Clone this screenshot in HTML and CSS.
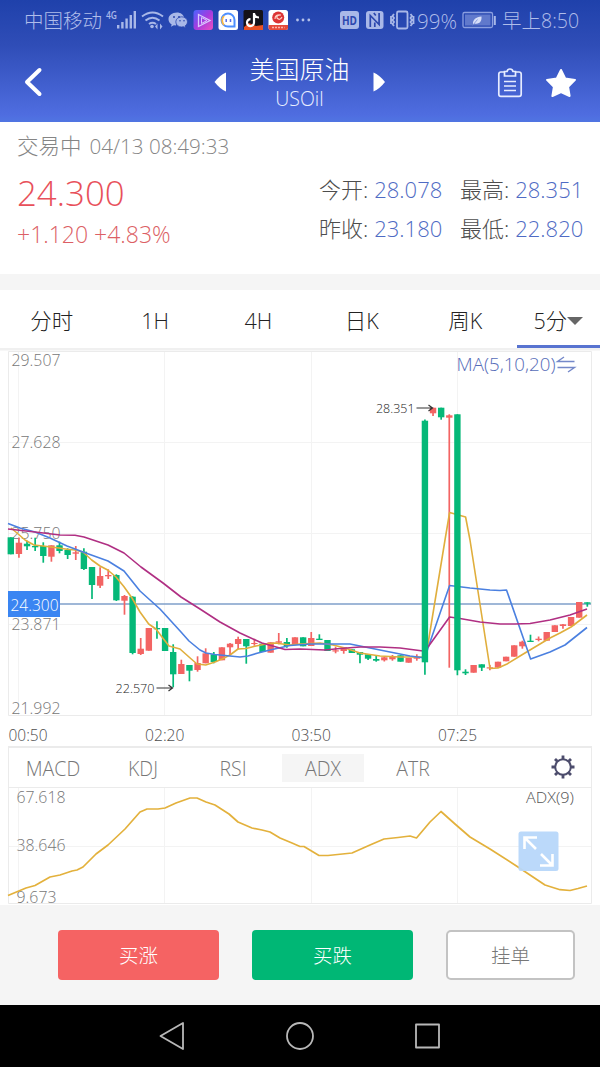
FILE: index.html
```html
<!DOCTYPE html>
<html lang="zh-CN">
<head>
<meta charset="utf-8">
<title>美国原油 USOil</title>
<link rel="stylesheet" href="styles.css">
</head>
<body>
<header class="header">
  <div class="status">
    <span class="carrier">中国移动</span>
    <svg class="status-icons" viewBox="105 0 210 40" width="210" height="40">
      <text x="106" y="18.5" class="net" textLength="11" lengthAdjust="spacingAndGlyphs">4G</text>
      <g fill="#a9b8e8">
        <rect x="117" y="25" width="2.4" height="3.5"/><rect x="121.200" y="22" width="2.400" height="6.500"/><rect x="125.400" y="18.500" width="2.400" height="10"/><rect x="129.600" y="15" width="2.400" height="13.500"/><rect x="133.600" y="11" width="2.400" height="17.500"/>
      </g>
      <g fill="none" stroke="#a9b8e8" stroke-width="2">
        <path d="M142 16.500q10.500-8 21 0M145.500 20.500q7-5.500 14 0M149 24q3.500-2.500 7 0"/>
      </g>
      <g fill="#a9b8e8"><circle cx="152" cy="26.500" r="1.800"/><path d="M155 26.500l2.500-3v6zM162.500 26.500l-2.500-3v6z"/>
        <path d="M177 12.500c-5 0-8.500 3-8.500 6.700 0 2.200 1.200 4 3.200 5.200l-.8 2.300 3-1.400 2.200.3c-.8-4.600 3-7.800 8.200-7.600-.7-3.300-3.700-5.500-7.300-5.500z"/>
        <path d="M187.500 21.800c0-3-2.800-5-5.800-5-3.200 0-5.900 2.100-5.900 5.100s2.700 5.100 5.900 5.100l1.800-.3 2.200 1.200-.6-2c1.500-1 2.400-2.400 2.400-4.100z" stroke="#2c47ae" stroke-width=".8"/>
      </g>
      <g fill="#2c47ae"><circle cx="174" cy="17" r="1"/><circle cx="179" cy="17" r="1"/><circle cx="180" cy="20.800" r=".8"/><circle cx="184" cy="20.800" r=".8"/></g>
      <defs><linearGradient id="video" x1="0" y1="0" x2="1" y2="1"><stop offset="0" stop-color="#4965ff"/><stop offset=".5" stop-color="#a33be0"/><stop offset="1" stop-color="#ee4fc0"/></linearGradient></defs>
      <rect x="193.500" y="10" width="19.500" height="20" rx="3" fill="url(#video)"/>
      <path d="M198.500 14.500l11.500 6-11.500 6z" fill="none" stroke="#d9c9ff" stroke-width="1.300"/><path d="M201.500 17.500l5.500 3-5.500 3z" fill="none" stroke="#d9c9ff"/>
      <rect x="218.500" y="10" width="19.500" height="20" rx="2.500" fill="#fff"/>
      <path d="M234 26.500h-6a6.500 6.500 0 1 1 6.500-6.500v6.500z" fill="none" stroke="#4d8fff" stroke-width="2"/><path d="M224 25a6.500 6.500 0 0 1 0-9" fill="none" stroke="#ffb93d" stroke-width="1.800"/><path d="M226.200 19v3M230.500 19v3" stroke="#536de8" stroke-width="1.500"/>
      <rect x="243.500" y="10" width="19.500" height="20" rx="1.500" fill="#151218"/><path d="M244 30v-3l5-4 7 3 7-1v5z" fill="#e95125"/>
      <path d="M254 13v9.500a3.500 3.500 0 1 1-3.500-3.400M254 13.500q1 4 5 4" fill="none" stroke="#fff" stroke-width="2.200"/>
      <rect x="268.500" y="10" width="19.500" height="20" rx="2.500" fill="#fff"/><circle cx="278.200" cy="17.500" r="6" fill="#dc3434"/><path d="M275 19q0-5 6-4-5 0-4 3 3 3 5-1" fill="none" stroke="#ffd0c4" stroke-width="1.200"/><path d="M268.500 25h19.500v3q0 2-2 2h-15.500q-2 0-2-2z" fill="#e54b3b"/>
      <path d="M272 27.500h12.500" stroke="#ffb1a8" stroke-width="1.500" stroke-dasharray="2 1"/>
      <g fill="#b3c0ea"><circle cx="297.500" cy="20" r="1.400"/><circle cx="303" cy="20" r="1.400"/><circle cx="308.800" cy="20" r="1.400"/></g>
    </svg>
    <svg class="device-icons" viewBox="339 0 77 40" width="77" height="40">
      <rect x="340" y="11" width="19" height="18" rx="3" fill="#a9b8e8"/><text x="342" y="25" class="hd" textLength="15" lengthAdjust="spacingAndGlyphs">HD</text>
      <rect x="366" y="11" width="17.500" height="18" rx="3" fill="#a9b8e8"/><path d="M370.300 27V15.500l8.800 9V13M373.800 13l2 2.500M374.800 27v-4.500" fill="none" stroke="#2c47ae" stroke-width="1.700"/>
      <g fill="none" stroke="#a9b8e8" stroke-width="1.800"><rect x="397" y="11.500" width="10.500" height="17" rx="1.500"/><path d="M394 14l-1.500 2 1.500 2-1.500 2 1.500 2-1.500 2 1.500 2M391 16v8M410.500 14l1.500 2-1.500 2 1.500 2-1.500 2 1.500 2-1.500 2M413.500 16v8"/></g>
    </svg>
    <span class="percent">99%</span>
    <svg class="battery" viewBox="462 0 35 40" width="35" height="40">
      <rect x="463" y="12.500" width="29.500" height="15" rx="1.500" fill="none" stroke="#8b9fe0" stroke-width="1.300"/><rect x="465" y="14.500" width="25.500" height="11" fill="#6079cc"/><rect x="493.800" y="16" width="2" height="9" fill="#a9b8e8"/><path d="M473 24.500c-.5-5 3-7.500 8.500-8 .4 4.500-1.500 8-7 7z" fill="#d6def8"/><path d="M472.500 25.500l5-6" stroke="#6d84d4" stroke-width=".7"/>
    </svg>
    <span class="clock">早上8:50</span>
  </div>
  <div class="nav">
    <svg class="back" viewBox="0 0 24 34" width="24" height="34"><path d="M18.500 5L6 17l12.500 12" fill="none" stroke="#fff" stroke-width="4" stroke-linecap="round" stroke-linejoin="round"/></svg>
    <div class="instrument">
      <svg viewBox="0 0 14 22" width="14" height="22"><path d="M13 1.500v19Q7 18 1.500 11 7 4 13 1.500z" fill="#fff"/></svg>
      <div class="names"><span class="name">美国原油</span><span class="symbol">USOil</span></div>
      <svg viewBox="0 0 14 22" width="14" height="22"><path d="M1.500 1.500v19q6-2.500 11.500-9.500-5.500-7-11.500-9.500z" fill="#fff"/></svg>
    </div>
    <svg class="actions" viewBox="495 60 82 42" width="82" height="42">
      <g fill="none" stroke="#e6ecff" stroke-width="1.700"><path d="M504 71h-4q-2.200 0-2.200 2.200v20q0 2.200 2.200 2.200h18q2.200 0 2.200-2.200v-20q0-2.200-2.200-2.200h-4"/><path d="M503.500 75v-4.500h2.500q.5-2.500 3-2.500t3 2.500h2.500V75z"/><path d="M503 80.500h12M503 85h12M503 89.500h12"/></g>
      <path d="M560 69l4.200 8.500 9.800 1.400-6.900 7 1.500 9.100-8.600-4-8.600 4 1.500-9.100-6.900-7 9.800-1.400z" fill="#fff" stroke="#fff" stroke-width="2" stroke-linejoin="round"/>
    </svg>
  </div>
</header>

<section class="quote">
  <div class="session">交易中<span class="stamp">04/13 08:49:33</span></div>
  <div class="quote-row">
    <div class="last"><div class="price">24.300</div><div class="change">+1.120 +4.83%</div></div>
    <div class="stats">
      <div>今开:<b>28.078</b></div><div>最高:<b>28.351</b></div>
      <div>昨收:<b>23.180</b></div><div>最低:<b>22.820</b></div>
    </div>
  </div>
</section>

<nav class="tabs">
  <span class="tab">分时</span><span class="tab">1H</span><span class="tab">4H</span><span class="tab">日K</span><span class="tab">周K</span>
  <span class="tab active">5分<i class="caret"></i></span>
</nav>

<svg class="chart" viewBox="0 348 600 398" width="600" height="398">
  <path d="M0 349.200H600" stroke="#f0f0f0" stroke-width="2.400"/>
  <path class="grid" d="M18.500 351V716M164.500 351V716M311.500 351V716M457.500 351V716M8 442.500H591M8 533.500H591M8 624.500H591"/>
  <path class="frame" d="M8.500 351.500H591.500V715.500H8.500z"/>
  <g class="axis">
    <text x="11.500" y="365.500" textLength="49" lengthAdjust="spacingAndGlyphs">29.507</text>
    <text x="11.500" y="447.500" textLength="49" lengthAdjust="spacingAndGlyphs">27.628</text>
    <text x="11.500" y="538.500" textLength="49" lengthAdjust="spacingAndGlyphs">25.750</text>
    <text x="11.500" y="629.500" textLength="49" lengthAdjust="spacingAndGlyphs">23.871</text>
    <text x="11.500" y="714" textLength="49" lengthAdjust="spacingAndGlyphs">21.992</text>
  </g>
  <path d="M8 604H591" stroke="#7f9fca" stroke-width="1.500"/>
  <g id="candles"></g>
  <g class="ma">
    <polyline stroke="#e0ae3c" points="11,528 17,533 25,540 34,545 43,546 59,548 67,549.3 75,550 83,552 91.7,560 100,566 107.7,570 116,577 124,586.7 132,598 140,612 148.7,624 156,629 162,637 169,646 180,649 189,657 197,664 205.7,665 215,662 222,659 230,655 238,649 246,648.5 256,646 266,644 275,643 290,645 300,644 320,643 333,645 345,648 360,653 380,656 400,657 425,657 427,650 445,540 449.6,512.5 465.6,517 470,540 490,668.5 498,668 507,664 520,656 530,650 540,644 550,638 560,633 571,627 587,615"/>
    <polyline stroke="#4b80e0" points="8,523.5 20,528 35,532 50,538 67,546 83,552 108,561 124,571 140,591 160,609 181,632 189,641 200,650 206,653 215,654.5 230,656 240,657 248,656 258,653 270,650 290,645.5 310,644 350,644 370,648 390,652 410,656 425,658 428,648 449.6,585.5 470,588 490,590 500,590.5 506.500,590 530.600,659 550,652 565,645 587,627.5"/>
    <polyline stroke="#b02f83" points="8,529 35,532 60,535 75,535.3 84,537 108,545 124,553 141,567 163,583 181,597 200,609 220,622 240,633 262,643 285,649.5 300,649 325,650 340,648.5 360,647 380,647 400,648 423,651 428,647 449.6,617 460,618.5 480,622 500,624 515,624 530,623.5 550,620 570,615 587,609"/>
  </g>
  <g id="spike"></g>
  <rect x="8" y="591" width="52" height="26" fill="#3a85f2"/>
  <text x="10.500" y="610.500" class="current" textLength="48" lengthAdjust="spacingAndGlyphs">24.300</text>
  <g class="marks"><text x="376" y="413" textLength="38.500" lengthAdjust="spacingAndGlyphs">28.351</text><text x="115.500" y="693" textLength="39" lengthAdjust="spacingAndGlyphs">22.570</text></g>
  <path d="M416.500 408H432M428.500 405l4 3-4 3M156.500 688H172M168.500 685l4 3-4 3" fill="none" stroke="#333" stroke-width="1.200"/>
  <text x="456.500" y="371" class="ma-label" textLength="99" lengthAdjust="spacingAndGlyphs">MA(5,10,20)</text>
  <path d="M574.500 361.500H557.500l6.500-4.500M557.500 367.500H574.500l-6.500 4.500" fill="none" stroke="#7488c9" stroke-width="1.400"/>
  <g class="times"><text x="8.500" y="740.500" textLength="39" lengthAdjust="spacingAndGlyphs">00:50</text><text x="145" y="740.500" textLength="39.500" lengthAdjust="spacingAndGlyphs">02:20</text><text x="291.500" y="740.500" textLength="39.500" lengthAdjust="spacingAndGlyphs">03:50</text><text x="438" y="740.500" textLength="39" lengthAdjust="spacingAndGlyphs">07:25</text></g>
</svg>

<div class="indicators">
  <span>MACD</span><span>KDJ</span><span>RSI</span><span class="chosen">ADX</span><span>ATR</span>
  <svg class="gear" viewBox="-13 -13 26 26" width="26" height="26"><circle r="7.800" fill="none" stroke="#4c4c6c" stroke-width="2"/><path d="M0-8V-11.500M0 8V11.500M-8 0H-11.500M8 0H11.500M5.700-5.700L8-8M-5.700-5.700L-8-8M5.700 5.700L8 8M-5.700 5.700L-8 8" stroke="#4c4c6c" stroke-width="2.800"/></svg>
</div>

<svg class="chart" viewBox="0 788 600 117" width="600" height="117">
  <path class="grid" d="M18.500 788V904M164.500 788V904M311.500 788V904M457.500 788V904M8 846.500H591"/>
  <path class="frame" d="M8.500 788V903.500H591.500V788"/>
  <g class="axis"><text x="16.500" y="802.500" textLength="49" lengthAdjust="spacingAndGlyphs">67.618</text><text x="16.500" y="851" textLength="49" lengthAdjust="spacingAndGlyphs">38.646</text><text x="16.500" y="903" textLength="40" lengthAdjust="spacingAndGlyphs">9.673</text></g>
  <text x="526" y="803" class="adx-label" textLength="48" lengthAdjust="spacingAndGlyphs">ADX(9)</text>
  <polyline fill="none" stroke="#e3b13c" stroke-width="1.700" stroke-linejoin="round" points="8,895.5 26,888 35,885.5 50,877 60,875 72,871 77,870 83,867 96,854 108,845 125,829 140,812 147,809 158,809 165,808 176,803 190,798 197,798 206,802 215,805 229,814 238,822 252,828 262,830 270,832 280,838 292,843 300,846.5 304,846.5 319,855.5 328,855.5 352,853 370,845 384,839 398,837.5 410,836 416.5,838 430,822 441,811.5 455,824 470,837 490,849 518,867 530,875 545,885 560,889.7 570,890.5 578,888.5 587,886"/>
  <rect x="518.500" y="831.500" width="40" height="39.500" rx="2.500" fill="#b7d7fa" fill-opacity=".94"/>
  <path d="M524.500 849V837.500H537M525 838L536 849M552.500 854V865.500H540M552 865L541 854" fill="none" stroke="#fff" stroke-width="2.600"/>
</svg>

<footer class="trade">
  <button class="btn rise">买涨</button><button class="btn fall">买跌</button><button class="btn pending">挂单</button>
</footer>
<div class="system">
  <svg viewBox="150 1005 300 62" width="300" height="62"><g fill="none" stroke="#b8b8b8" stroke-width="1.800" stroke-linejoin="round"><path d="M160.500 1036L183 1023V1049z"/><circle cx="300" cy="1036" r="13"/><rect x="416" y="1024.500" width="23" height="23"/></g></svg>
</div>
<script src="chart.js"></script>
</body>
</html>
```

FILE: styles.css
```css
* { box-sizing: border-box; }
body {
  margin: 0;
  width: 600px;
  height: 1067px;
  overflow: hidden;
  display: flex;
  flex-direction: column;
  background: #fff;
  font-family: "Open Sans", "Noto Sans CJK SC", sans-serif;
  font-weight: 300;
}
svg { display: block; flex: none; }

.header {
  flex: none;
  height: 122px;
  background: linear-gradient(#1f41ab 0, #2f4db7 45px, #4f6de0 115px, #5075e2 122px);
  color: #e9eeff;
}
.status {
  height: 40px;
  padding-left: 24px;
  display: flex;
  align-items: center;
  color: #b0bdea;
  font-size: 19.5px;
  line-height: 40px;
  white-space: nowrap;
}
.status span { padding-top: 2px; }
.carrier { width: 81px; }
.device-icons { margin-left: 24px; }
.status .percent { width: 46px; font-size: 20.5px; padding-left: 1px; }
.clock { margin-left: 5px; font-size: 19.5px; }
.net { font: 600 11px "Open Sans", sans-serif; fill: #a9b8e8; }
.hd { font: 700 12px "Open Sans", sans-serif; fill: #2c47ae; }
.nav {
  height: 82px;
  padding: 2px 22px 0 21px;
  display: grid;
  grid-template-columns: 82px 1fr 82px;
  align-items: center;
}
.instrument { display: flex; justify-content: center; align-items: center; gap: 22px; }
.names { width: 101px; padding-top: 2px; display: flex; flex-direction: column; align-items: center; white-space: nowrap; }
.name { font-size: 25px; line-height: 32px; color: #fff; }
.symbol { font-size: 19.5px; line-height: 28px; }

.quote {
  flex: none;
  height: 168px;
  border-bottom: 16px solid #f5f5f5;
  padding: 8px 16px 0 17px;
}
.session { font-size: 21.5px; line-height: 32px; color: #858585; white-space: nowrap; }
.stamp { margin-left: 8px; font-size: 20.6px; }
.quote-row { display: flex; justify-content: space-between; }
.price { font-size: 34.8px; line-height: 46px; padding-top: 8px; color: #e8505a; }
.change { font-size: 23px; line-height: 36px; color: #dc5f65; }
.stats {
  display: grid;
  grid-template-columns: 141px 124px;
  grid-auto-rows: 38.5px;
  padding-top: 8px;
  font-size: 22px;
  line-height: 38px;
  color: #4d4d4d;
  white-space: nowrap;
}
.stats b { font-weight: 300; color: #4f6bc4; margin-left: 6px; }

.tabs {
  flex: none;
  height: 58px;
  display: grid;
  grid-template-columns: repeat(5, 103.4px) 83px;
  grid-template-rows: 58px;
  font-size: 21.5px;
  line-height: 61px;
  text-align: center;
  color: #222;
}
.active { height: 58px; border-bottom: 3px solid #5873d0; white-space: nowrap; }
.caret {
  display: inline-block;
  border: 8px solid transparent;
  border-top-color: #666;
  border-bottom: 0;
  vertical-align: 4px;
}

.chart { overflow: visible; }
.chart text { font-family: "Open Sans", sans-serif; font-weight: 300; }
.grid { fill: none; stroke: #f3f3f3; }
.frame { fill: none; stroke: #ebebeb; }
.axis { font-size: 16.3px; fill: #777; }
.times { font-size: 16.3px; fill: #4d4d4d; }
.marks { font-size: 13.2px; fill: #222; }
.current { font-size: 16.3px; fill: #fff; }
.ma { fill: none; stroke-width: 1.6; stroke-linejoin: round; }
.ma-label { font-size: 18.4px; fill: #566cb8; }
.adx-label { font-size: 15px; fill: #555; }
.up { fill: #f36463; stroke: #f36463; }
.down { fill: #05b878; stroke: #05b878; }
.up path, .down path { stroke-width: 1.7; }
.up rect, .down rect { stroke: none; }

.indicators {
  flex: none;
  height: 42px;
  margin: 0 8px;
  padding: 1px 0 0 3px;
  border: 1px solid #ebebeb;
  border-width: 2px 1px 1px;
  display: flex;
  align-items: center;
  font-size: 19.5px;
  line-height: 30px;
  text-align: center;
  color: #777;
}
.indicators span { width: 82px; height: 28px; margin-right: 8px; }
.indicators .chosen { background: #f5f5f5; }
.gear { margin-left: 88px; margin-top: -2px; }

.trade {
  flex: none;
  height: 100px;
  padding: 25px 25px 0 58px;
  display: flex;
  gap: 33px;
  background: #f5f5f5;
}
.btn {
  width: 161px;
  height: 50px;
  padding: 1px 0 0;
  border: 0;
  border-radius: 4px;
  color: #fff;
  font: 300 19.5px/50px "Open Sans", "Noto Sans CJK SC", sans-serif;
}
.rise { background: #f56363; }
.fall { background: #00b775; }
.pending { width: 129px; border: 2px solid #c3c3c3; border-radius: 5px; background: #fff; color: #777; line-height: 46px; }
.system { flex: 1; background: #000; display: flex; justify-content: center; }
```

FILE: chart.js
```js
// Each candle: direction, body top, body bottom, wick top, wick bottom.
const candles = [
  ['d',537.3,554.3],['u',542.7,554,537.5,557.7],['d',543.7,546.3,540.7,550],['d',546,547.3,537.7,551],
  ['d',546,556,542.3,562.7],['u',545.3,556.7,545.3,561.7],['d',545.3,551,541.7,553.3],['d',550,555,548.3,559],
  ['u',552.3,553.7,546,560],['d',551.7,569,548.3,570],['d',567,585,567,599],['u',576,585.7,567.3,588],
  ['u',575,576.3,569.3,579],['d',575,600.3,574.3,601],['u',596,600.7,595,614.7],['d',596.7,653,596.3,654.3],
  ['u',648.7,654,638,655],['u',628,650.7],['d',628,629.3,621.3,638.7],['d',628,651],
  ['d',652,674.3,644.3,687.3],['u',664,674,659.7,674],['d',665,670.7,665,681.3],['u',663,670,656.3,671.7],
  ['u',653.3,663.3,648.3,663.3],['d',654.3,662,652,663.3],['u',647.3,660.3],['u',643.7,647.3,643,655],
  ['u',639,644,636.7,649.3],['d',639,646.3,639,663.7],['u',643,644,638.7,645.7],['d',643.7,652],
  ['u',642.3,652.7],['u',641.3,642.7,633,644.3],['d',642,646,638,647.7],['u',637.3,644],
  ['d',637.3,646.3],['u',638,646,632,646],['d',638.7,640,634.3,640],['d',640,651],
  ['u',650.3,651.5,646.7,653.3],['u',647.3,651,647.3,653.7],['d',649.3,653],['d',652,654.7,652,663.3],
  ['d',654.3,658.7,654.3,660],['d',659,660.7,655.7,661.7],['u',657.3,660.3,657,661.5],['u',656,659.3,655,660.7],
  ['d',655.3,661.7],['u',658,662.7],['u',656.7,658.7,654.3,660.7],['d',420.7,662.3,419.5,674.7],
  ['u',407.7,413.3,407.7,416],['d',407.7,417.3,407.7,419.7],['u',415.3,417.7,414.3,667.7],['d',414.3,670.3,414.3,675.3],
  ['d',671.7,673.3,669.3,675],['u',665,672.7],['d',664.3,667.7,664.3,671],['u',667.3,668.5,665,670.3],
  ['u',661.7,667.7],['u',656.7,661.3],['u',645.3,656.7],['u',641.7,646.3,640.7,648.7],
  ['d',640.7,642,634.7,642],['u',638.7,640,636.5,641.3],['u',632,640.7],['u',625.3,632],
  ['u',624.3,626,624,628.7],['u',617,626],['u',602,617.7],['d',602.3,603.7,602.3,606.7]
];
const NS = 'http://www.w3.org/2000/svg';
const make = (name, attrs, parent) => {
  const el = document.createElementNS(NS, name);
  for (const key in attrs) el.setAttribute(key, attrs[key]);
  parent.appendChild(el);
  return el;
};
candles.forEach(([dir, top, bottom, high = top, low = bottom], i) => {
  const x = 10.8 + 8.12 * i;
  const layer = document.getElementById(i === 51 || i === 55 ? 'spike' : 'candles');
  const g = make('g', { class: dir === 'u' ? 'up' : 'down' }, layer);
  make('path', { d: `M${x} ${high}V${low}` }, g);
  make('rect', { x: x - 3.2, y: top, width: 6.4, height: bottom - top }, g);
});
```
